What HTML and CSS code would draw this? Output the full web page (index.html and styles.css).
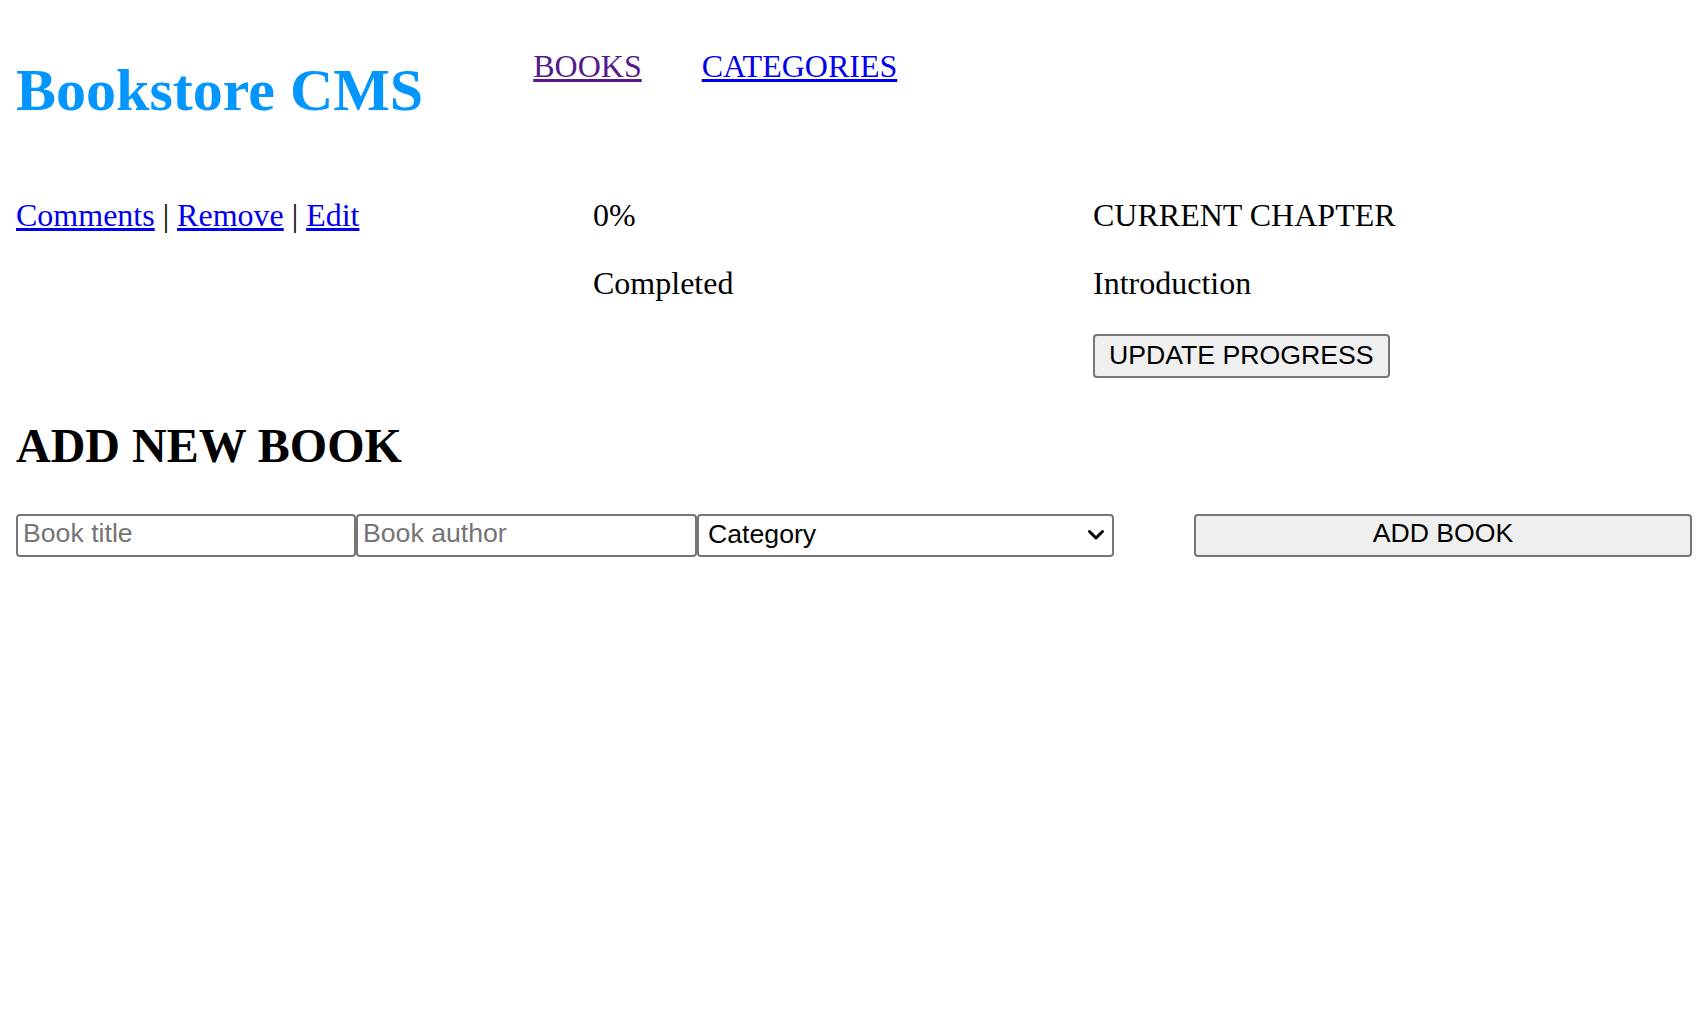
FILE: index.html
```html
<!DOCTYPE html>
<html lang="en">
<head>
<meta charset="utf-8">
<title>Bookstore CMS</title>
<link rel="stylesheet" href="styles.css">
</head>
<body>
<header class="header">
  <h1 class="logo">Bookstore CMS</h1>
  <nav>
    <ul class="nav-list">
      <li><a class="link link-visited" href="#">BOOKS</a></li>
      <li><a class="link" href="#">CATEGORIES</a></li>
    </ul>
  </nav>
</header>
<main>
  <section class="book">
    <div class="book-actions">
      <p class="text"><a class="link" href="#">Comments</a> | <a class="link" href="#">Remove</a> | <a class="link" href="#">Edit</a></p>
    </div>
    <div class="book-progress">
      <p class="text">0%</p>
      <p class="text">Completed</p>
    </div>
    <div class="book-chapter">
      <p class="text">CURRENT CHAPTER</p>
      <p class="text">Introduction</p>
      <button class="btn btn-update" type="button">UPDATE PROGRESS</button>
    </div>
  </section>
  <section class="add">
    <h2 class="add-title">ADD NEW BOOK</h2>
    <form class="add-form">
      <input class="field field-title" type="text" placeholder="Book title">
      <input class="field field-author" type="text" placeholder="Book author">
      <div class="select-wrap">
        <select class="field field-select">
          <option>Category</option>
        </select>
        <svg class="chevron" width="18" height="12" viewBox="0 0 18 12" aria-hidden="true">
          <polyline points="2.5,2.5 9,9 15.5,2.5" fill="none" stroke="#000" stroke-width="3" stroke-linecap="round" stroke-linejoin="round"/>
        </svg>
      </div>
      <button class="btn btn-add" type="button">ADD BOOK</button>
    </form>
  </section>
</main>
</body>
</html>
```
FILE: styles.css
```css
body {
  margin: 16px;
  font-family: "Liberation Serif", "Times New Roman", serif;
  font-size: 32px;
  color: #000;
  background: #fff;
}

.header {
  display: flex;
  align-items: flex-start;
}

.logo {
  margin: 40px 0;
  font-size: 60px;
  font-weight: bold;
  color: #0396ff;
}

.nav-list {
  display: flex;
  gap: 60px;
  list-style: none;
  margin: 32px 0 32px 110px;
  padding: 0;
}

.link {
  color: #0000ee;
  text-decoration: underline;
}

.link-visited {
  color: #551a8b;
}

.book {
  display: grid;
  grid-template-columns: 577px 500px 1fr;
}

.text {
  margin: 32px 0 31px;
}

.text + .text {
  margin: 31px 0 32px;
}

.btn {
  font-family: "Liberation Sans", Arial, sans-serif;
  font-size: 26.67px;
  color: #000;
  background: #efefef;
  border: 2px solid #767676;
  border-radius: 4px;
  padding: 4px 14px 5px;
  margin: 0;
}

.btn-update {
  display: block;
  width: fit-content;
}

.add-title {
  margin: 40px 0 41px;
  font-size: 48px;
  font-weight: bold;
}

.add-form {
  display: flex;
  align-items: flex-start;
}

.field {
  box-sizing: border-box;
  height: 43px;
  margin: 0;
  padding: 2px 5px 6px;
  font-family: "Liberation Sans", Arial, sans-serif;
  font-size: 26.67px;
  color: #000;
  background: #fff;
  border: 2px solid #767676;
  border-radius: 4px;
}

.field::placeholder {
  color: #757575;
}

.field-title {
  width: 340px;
}

.field-author {
  width: 341px;
}

.select-wrap {
  position: relative;
  width: 417px;
}

.field-select {
  display: block;
  width: 100%;
  padding-left: 9px;
  appearance: none;
  -webkit-appearance: none;
}

.chevron {
  position: absolute;
  top: 15px;
  right: 9px;
  pointer-events: none;
}

.btn-add {
  box-sizing: border-box;
  width: 498px;
  height: 43px;
  margin-left: auto;
  padding: 2px 12px 6px;
}
```
